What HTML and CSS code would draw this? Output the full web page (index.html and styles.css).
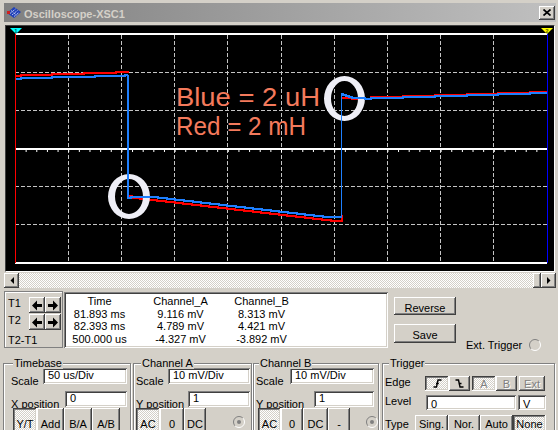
FILE: index.html
```html
<!DOCTYPE html>
<html lang="en">
<head>
<meta charset="utf-8">
<title>Oscilloscope-XSC1</title>
<link rel="stylesheet" href="styles.css">
</head>
<body>
<div class="win">
  <div class="title">
    <svg class="ticon" width="16" height="13" viewBox="0 0 16 13">
      <polygon points="1,7 8,1 15,6 8,12" fill="#1f3fb8"/>
      <path d="M4,7.5 L9.5,3 M6,9 L11.5,4.5 M8,10.5 L13,6.5 M5,4.5 L11,9.5" stroke="#e8ecff" stroke-width="1" stroke-dasharray="1 1"/>
      <rect x="1" y="5" width="3" height="3" fill="#d02020"/>
    </svg>
    <span class="ttext">Oscilloscope-XSC1</span>
    <div class="close raised">
      <svg width="8" height="7" viewBox="0 0 8 7"><path d="M0.5,0.5 L7.5,6.5 M7.5,0.5 L0.5,6.5" stroke="#000" stroke-width="1.7"/></svg>
    </div>
  </div>

  <div class="screen">
    <svg width="548" height="245" viewBox="6 26 548 245">
      <rect x="6" y="26" width="548" height="245" fill="#000"/>
      <g stroke="#c4c4c4" stroke-width="1" stroke-dasharray="4 2" fill="none">
        <path d="M68.5,35 V262 M121.5,35 V262 M174.5,35 V262 M227.5,35 V262 M281.5,35 V262 M334.5,35 V262 M387.5,35 V262 M440.5,35 V262 M493.5,35 V262"/>
        <path d="M15,72.5 H547 M15,110.5 H547 M15,186.5 H547 M15,224.5 H547"/>
      </g>
      <rect x="15" y="33" width="532" height="2" fill="#fff"/>
      <rect x="15" y="148" width="532" height="2" fill="#fff"/>
      <line x1="15" y1="151" x2="548" y2="151" stroke="#fff" stroke-width="2" stroke-dasharray="1 9.64"/>
      <rect x="15" y="262" width="532" height="2" fill="#fff"/>

      <path d="M15,79 H21 V78 H52 V77 H95 V76 H125 V75 H128" stroke="#1e80ff" stroke-width="2" fill="none"/>
      <path d="M15,76 H21 V75 H52 V74 H84 V73 H116 V72 H129" stroke="#ff0000" stroke-width="2" fill="none"/>
      <path d="M129,196 H132 V198 H140 V199 H149 V200 H157 V201 H166 V202 H175 V203 H183 V204 H192 V205 H201 V206 H209 V207 H218 V208 H227 V209 H235 V210 H244 V211 H253 V212 H261 V213 H270 V214 H279 V215 H287 V216 H296 V217 H305 V218 H313 V219 H322 V220 H331 V221 H342 V215" stroke="#ff0000" stroke-width="2" fill="none"/>
      <path d="M342,98 H352 V99 H371 V97 H403 V96 H435 V95 H467 V94 H498 V93 H530 V92 H547" stroke="#ff0000" stroke-width="2" fill="none"/>

      <path fill="#eeeef6" fill-rule="evenodd" d="M108,196.5 a21,22.5 0 1,0 42,0 a21,22.5 0 1,0 -42,0 Z M115,196.5 a14,17.5 0 1,0 28,0 a14,17.5 0 1,0 -28,0 Z"/>
      <path fill="#eeeef6" fill-rule="evenodd" d="M324,98.5 a20.5,22.5 0 1,0 41,0 a20.5,22.5 0 1,0 -41,0 Z M331,98.5 a13.5,17.5 0 1,0 27,0 a13.5,17.5 0 1,0 -27,0 Z"/>

      <rect x="127" y="75" width="2" height="124" fill="#1e80ff"/>
      <path d="M128,198 H131 V197 H158 V198 H167 V199 H175 V200 H184 V201 H193 V202 H201 V203 H210 V204 H219 V205 H227 V206 H236 V207 H245 V208 H253 V209 H262 V210 H271 V211 H279 V212 H288 V213 H297 V214 H305 V215 H314 V216 H323 V217 H341" stroke="#1e80ff" stroke-width="2" fill="none"/>
      <rect x="341" y="94" width="1" height="124" fill="#1e80ff"/>
      <path d="M341,94 H343 V95 H346 V96 H349 V97 H352 V98 H365 V99 H371 V98 H403 V97 H435 V96 H467 V95 H498 V94 H530 V93 H547" stroke="#1e80ff" stroke-width="2" fill="none"/>

      <text x="176" y="106" font-family="Liberation Sans, Arial, sans-serif" font-size="26" fill="#f47a5c" textLength="144" lengthAdjust="spacingAndGlyphs">Blue = 2 uH</text>
      <text x="176" y="135" font-family="Liberation Sans, Arial, sans-serif" font-size="26" fill="#f47a5c" textLength="130" lengthAdjust="spacingAndGlyphs">Red = 2 mH</text>

      <rect x="15" y="28" width="1" height="235" fill="#ff0000"/>
      <rect x="547" y="28" width="1" height="235" fill="#0000ff"/>
      <polygon points="10,28 22,28 16,34" fill="#00ffff"/>
      <text x="16" y="33" font-family="Liberation Sans, Arial, sans-serif" font-size="6" font-weight="bold" text-anchor="middle" fill="#006060">1</text>
      <polygon points="541,28 553,28 547,34" fill="#ffff00"/>
      <text x="547" y="33" font-family="Liberation Sans, Arial, sans-serif" font-size="6" font-weight="bold" text-anchor="middle" fill="#606000">2</text>
    </svg>
  </div>

  <div class="hscroll">
    <div class="sbtn raised"><svg width="4" height="7" viewBox="0 0 4 7"><polygon points="4,0 4,7 0.5,3.5" fill="#000"/></svg></div>
    <div class="track"></div>
    <div class="thumb raised"></div>
    <div class="sbtn raised"><svg width="4" height="7" viewBox="0 0 4 7"><polygon points="0,0 0,7 3.5,3.5" fill="#000"/></svg></div>
  </div>

  <div class="mid">
    <div class="tbox">
      <span class="tl">T1</span>
      <div class="abtn raised"><svg width="10" height="11" viewBox="0 0 10 11"><polygon points="0,5.5 5,0.5 5,4 10,4 10,7 5,7 5,10.5" fill="#000"/></svg></div>
      <div class="abtn raised"><svg width="10" height="11" viewBox="0 0 10 11"><polygon points="10,5.5 5,0.5 5,4 0,4 0,7 5,7 5,10.5" fill="#000"/></svg></div>
      <span class="tl">T2</span>
      <div class="abtn raised"><svg width="10" height="11" viewBox="0 0 10 11"><polygon points="0,5.5 5,0.5 5,4 10,4 10,7 5,7 5,10.5" fill="#000"/></svg></div>
      <div class="abtn raised"><svg width="10" height="11" viewBox="0 0 10 11"><polygon points="10,5.5 5,0.5 5,4 0,4 0,7 5,7 5,10.5" fill="#000"/></svg></div>
      <span class="tl t21">T2-T1</span>
    </div>
    <div class="data sunken">
      <div class="dgrid">
        <span>Time</span><span>Channel_A</span><span>Channel_B</span>
        <span>81.893 ms</span><span>9.116 mV</span><span>8.313 mV</span>
        <span>82.393 ms</span><span>4.789 mV</span><span>4.421 mV</span>
        <span>500.000 us</span><span>-4.327 mV</span><span>-3.892 mV</span>
      </div>
    </div>
    <div class="bcol">
      <div class="pbtn raised">Reverse</div>
      <div class="pbtn raised save">Save</div>
    </div>
    <div class="ext">
      <span>Ext. Trigger</span>
      <svg class="radio" width="12" height="12" viewBox="0 0 12 12">
        <circle cx="6" cy="6" r="5" fill="#d4d0c8"/>
        <path d="M2.1,9.9 A5.5,5.5 0 0,1 9.9,2.1" stroke="#808080" fill="none"/>
        <path d="M9.9,2.1 A5.5,5.5 0 0,1 2.1,9.9" stroke="#fff" fill="none"/>
      </svg>
    </div>
  </div>

  <div class="bottom">
    <div class="grp tb">
      <span class="legend">Timebase</span>
      <div class="row r1"><span class="lab w32">Scale</span><div class="inp sunken w84">50 us/Div</div></div>
      <div class="row r2"><span class="lab w54">X position</span><div class="inp sunken w62">0</div></div>
      <div class="row r3 ml2">
        <div class="tog pressed w24">Y/T</div>
        <div class="tog raised w27">Add</div>
        <div class="tog raised w28">B/A</div>
        <div class="tog raised w28">A/B</div>
      </div>
    </div>
    <div class="grp ca">
      <span class="legend">Channel A</span>
      <div class="row r1"><span class="lab w32">Scale</span><div class="inp sunken w82">10 mV/Div</div></div>
      <div class="row r2"><span class="lab w52">Y position</span><div class="inp sunken w62">1</div></div>
      <div class="row r3">
        <div class="tog pressed w24">AC</div>
        <div class="tog raised w24">0</div>
        <div class="tog raised w22">DC</div>
        <svg class="rdot ml27" width="12" height="12" viewBox="0 0 12 12">
          <circle cx="6" cy="6" r="5" fill="#d4d0c8"/>
          <path d="M2.1,9.9 A5.5,5.5 0 0,1 9.9,2.1" stroke="#808080" fill="none"/>
          <path d="M9.9,2.1 A5.5,5.5 0 0,1 2.1,9.9" stroke="#fff" fill="none"/>
          <circle cx="6" cy="6" r="2" fill="#808080"/>
        </svg>
      </div>
    </div>
    <div class="grp cb">
      <span class="legend">Channel B</span>
      <div class="row r1"><span class="lab w34">Scale</span><div class="inp sunken w84">10 mV/Div</div></div>
      <div class="row r2"><span class="lab w58">Y position</span><div class="inp sunken w60">1</div></div>
      <div class="row r3 ml2">
        <div class="tog pressed w23">AC</div>
        <div class="tog raised w22">0</div>
        <div class="tog raised w25">DC</div>
        <div class="tog raised w22">-</div>
        <svg class="rdot ml16" width="12" height="12" viewBox="0 0 12 12">
          <circle cx="6" cy="6" r="5" fill="#d4d0c8"/>
          <path d="M2.1,9.9 A5.5,5.5 0 0,1 9.9,2.1" stroke="#808080" fill="none"/>
          <path d="M9.9,2.1 A5.5,5.5 0 0,1 2.1,9.9" stroke="#fff" fill="none"/>
          <circle cx="6" cy="6" r="2" fill="#808080"/>
        </svg>
      </div>
    </div>
    <div class="grp tr">
      <span class="legend">Trigger</span>
      <div class="trow edge">
        <span class="tlab w40">Edge</span>
        <div class="ebtn pressed w24"><svg width="9" height="9" viewBox="0 0 9 9"><path d="M0.5,8 H3.5 L5,1 H8.5 M3,4.5 H5.8" stroke="#000" stroke-width="1.4" fill="none"/></svg></div>
        <div class="ebtn raised w21"><svg width="9" height="9" viewBox="0 0 9 9"><path d="M0.5,1 H3.5 L5,8 H8.5 M3.5,4.5 H6.5" stroke="#000" stroke-width="1.4" fill="none"/></svg></div>
        <div class="ebtn pressed dis w24 ml2">A</div>
        <div class="ebtn raised dis w21">B</div>
        <div class="ebtn raised dis w26 ml2">Ext</div>
      </div>
      <div class="trow level">
        <span class="tlab w41">Level</span>
        <div class="tinp sunken w90">0</div>
        <div class="tinp sunken w28 ml2">V</div>
      </div>
      <div class="trow type">
        <span class="tlab w30 pt3">Type</span>
        <div class="ttog raised w33">Sing.</div>
        <div class="ttog raised w32">Nor.</div>
        <div class="ttog raised w33">Auto</div>
        <div class="ttog pressed w33">None</div>
      </div>
    </div>
  </div>
</div>
</body>
</html>
```

FILE: styles.css
```css
* { box-sizing: border-box; margin: 0; padding: 0; }
html, body { width: 558px; height: 430px; overflow: hidden; }
body {
  background: #d4d0c8;
  font-family: "Liberation Sans", Arial, sans-serif;
  font-size: 11px;
  color: #000;
}
.win { width: 558px; height: 430px; overflow: hidden; padding-top: 3px; }

.raised {
  background-color: #d4d0c8;
  box-shadow: inset -1px -1px #404040, inset 1px 1px #fff, inset -2px -2px #808080, inset 2px 2px #d4d0c8;
}
.pressed {
  background-color: #d4d0c8;
  background-image: repeating-conic-gradient(#fff 0 25%, #d4d0c8 0 50%);
  background-size: 2px 2px;
  box-shadow: inset -1px -1px #fff, inset 1px 1px #404040, inset -2px -2px #d4d0c8, inset 2px 2px #808080;
}
.sunken {
  background: #fff;
  box-shadow: inset 1px 1px #808080, inset -1px -1px #fff, inset 2px 2px #404040, inset -2px -2px #d4d0c8;
}
.dis { color: #808080; text-shadow: 1px 1px 0 #fff; }

/* title bar */
.title {
  height: 19px;
  margin: 0 2px 0 4px;
  background: linear-gradient(to right, #808080, #c0c0c0);
  display: flex;
  align-items: center;
  color: #d4d0c8;
  font-weight: bold;
  font-size: 11px;
}
.ticon { display: block; margin-left: 2px; flex: none; }
.ttext { margin-left: 2px; padding-top: 2px; line-height: 12px; }
.close {
  margin-left: auto;
  margin-right: 1px;
  width: 16px;
  height: 14px;
  display: flex;
  align-items: center;
  justify-content: center;
}
.close svg { display: block; }

/* scope screen */
.screen {
  margin: 3px 0 0 5px;
  width: 550px;
  height: 247px;
  border: 1px solid;
  border-color: #404040 #fff #fff #404040;
}
.screen svg { display: block; }

/* scrollbar */
.hscroll { margin: 1px 0 0 4px; width: 552px; height: 15px; display: flex; }
.sbtn { width: 15px; height: 15px; display: flex; align-items: center; justify-content: center; flex: none; }
.sbtn svg { display: block; }
.track {
  flex: 1;
  background-image: repeating-conic-gradient(#fff 0 25%, #d4d0c8 0 50%);
  background-size: 2px 2px;
}
.thumb { width: 8px; flex: none; }

/* measurement row */
.mid { display: flex; margin-top: 3px; height: 57px; }
.tbox {
  margin-left: 4px;
  width: 59px;
  height: 57px;
  flex: none;
  border: 1px solid #808080;
  box-shadow: inset 1px 1px #fff;
  display: grid;
  grid-template-columns: 21px 16px 16px;
  grid-template-rows: 16px 16px auto;
  row-gap: 1px;
  padding: 5px 0 0 3px;
  align-content: start;
}
.tl { line-height: 13px; }
.t21 { grid-column: 1 / -1; padding-top: 3px; }
.abtn { width: 16px; height: 16px; display: flex; align-items: center; justify-content: center; }
.abtn svg { display: block; }

.data { margin: 1px 0 0 1px; width: 324px; height: 56px; flex: none; padding-top: 3px; }
.dgrid {
  display: grid;
  grid-template-columns: 81px 81px 81px;
  margin-left: -5px;
  line-height: 12.5px;
  text-align: center;
  white-space: nowrap;
}

.bcol { margin-left: 6px; width: 62px; flex: none; display: flex; flex-direction: column; }
.pbtn {
  height: 18px;
  margin-top: 6px;
  display: flex;
  align-items: center;
  justify-content: center;
  padding-top: 3px;
  line-height: 12px;
}
.pbtn.save { height: 19px; margin-top: 9px; }

.ext { margin-left: 10px; padding-top: 51px; display: flex; align-items: center; line-height: 12px; white-space: nowrap; }
.ext .radio { display: block; margin-left: 7px; flex: none; }

/* bottom group boxes */
.bottom { display: flex; margin-top: 15px; }
.grp {
  position: relative;
  height: 80px;
  flex: none;
  border: 1px solid #808080;
  box-shadow: inset 1px 1px #fff, 1px 1px 0 #fff;
}
.legend {
  position: absolute;
  top: -7px;
  background: #d4d0c8;
  padding: 0 1px;
  line-height: 12px;
  white-space: nowrap;
}
.tb { margin-left: 3px; width: 128px; padding-left: 7px; }
.ca { margin-left: 2px; width: 119px; padding-left: 2px; }
.cb { margin-left: 1px; width: 126px; padding-left: 2px; }
.tr { margin-left: 3px; width: 173px; padding-left: 2px; }
.tb .legend { left: 9px; }
.ca .legend { left: 7px; }
.cb .legend { left: 5px; }
.tr .legend { left: 6px; }

.row { display: flex; height: 16px; align-items: flex-start; }
.r1 { margin-top: 4px; }
.r2 { margin-top: 7px; }
.r3 { margin-top: 1px; height: 32px; }
.lab { flex: none; line-height: 16px; padding-top: 5px; white-space: nowrap; }
.inp { flex: none; height: 16px; line-height: 14px; padding-left: 5px; white-space: nowrap; }
.tog { flex: none; height: 31px; display: flex; align-items: center; justify-content: center; line-height: 12px; }
.rdot { display: block; flex: none; margin-top: 8px; }

.trow { display: flex; align-items: flex-start; }
.edge { margin-top: 12px; height: 15px; }
.level { margin-top: 4px; height: 15px; }
.type { margin-top: 5px; height: 18px; }
.tlab { flex: none; line-height: 12px; white-space: nowrap; }
.pt3 { padding-top: 3px; }
.ebtn { flex: none; height: 15px; display: flex; align-items: center; justify-content: center; line-height: 12px; }
.ebtn svg { display: block; }
.tinp { flex: none; height: 15px; line-height: 14px; padding: 2px 0 0 5px; white-space: nowrap; }
.ttog { flex: none; height: 18px; display: flex; align-items: center; justify-content: center; line-height: 12px; }

.w21 { width: 21px; } .w22 { width: 22px; } .w23 { width: 23px; } .w24 { width: 24px; }
.w25 { width: 25px; } .w26 { width: 26px; } .w27 { width: 27px; } .w28 { width: 28px; }
.w30 { width: 30px; } .w32 { width: 32px; } .w33 { width: 33px; } .w34 { width: 34px; }
.w40 { width: 40px; } .w41 { width: 41px; } .w52 { width: 52px; } .w54 { width: 54px; }
.w58 { width: 58px; } .w60 { width: 60px; } .w62 { width: 62px; } .w82 { width: 82px; }
.w84 { width: 84px; } .w90 { width: 90px; }
.ml2 { margin-left: 2px; } .ml16 { margin-left: 16px; } .ml27 { margin-left: 27px; }
```
